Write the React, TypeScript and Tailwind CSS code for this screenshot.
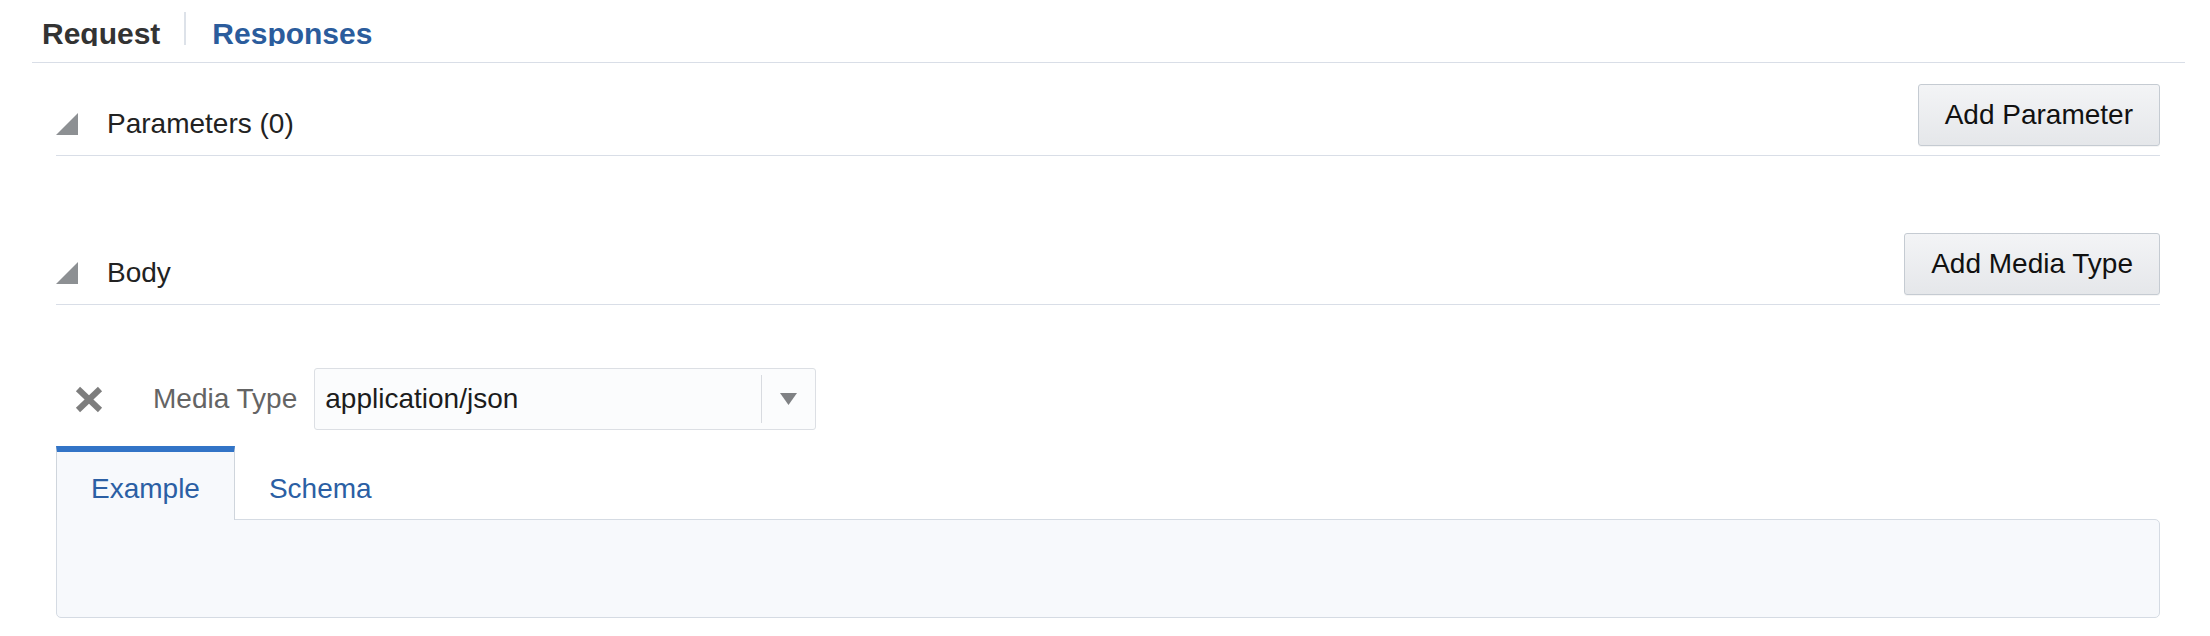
import React from "react";

const font = { fontFamily: '"Liberation Sans", Arial, Helvetica, sans-serif' };

const Caret = () => (
  <svg width="22" height="22" viewBox="0 0 22 22" className="shrink-0">
    <polygon points="22,0 22,22 0,22" fill="#8d9093" />
  </svg>
);

const Button = ({ label }: { label: string }) => (
  <button className="h-[62px] px-[26px] rounded-[3px] border border-[#c5cbd2] bg-gradient-to-b from-[#f3f4f6] to-[#e5e7ea] text-[28px] leading-[32px] text-[#111] shadow-[0_1px_0_rgba(0,0,0,0.04)]">
    {label}
  </button>
);

const SectionHeader = ({ title, action, top }: { title: string; action: string; top: string }) => (
  <div className={`flex items-end justify-between border-b border-[#d9dee7] ${top}`}>
    <div className="flex items-center pb-[15px]">
      <Caret />
      <span className="ml-[29px] text-[28px] leading-[32px] text-[#222]">{title}</span>
    </div>
    <div className="mb-[9px]">
      <Button label={action} />
    </div>
  </div>
);

export default function App() {
  return (
    <div className="w-[2210px] h-[636px] bg-white overflow-hidden" style={font}>
      <div className="pl-[32px] pr-[25px]">
        {/* top tabs */}
        <div className="h-[63px] border-b border-[#d9dee7]">
          <div className="flex h-[46px] overflow-hidden pl-[10px]">
            <span className="pt-[19px] text-[30px] leading-[30px] font-bold text-[#333]">Request</span>
            <div className="ml-[24px] mt-[12px] w-[2px] h-[33px] bg-[#dde2e9]" />
            <span className="ml-[26px] pt-[19px] text-[30px] leading-[30px] font-bold text-[#2b5c9c]">
              Responses
            </span>
          </div>
        </div>

        <div className="pl-[24px] pr-[25px]">
          <SectionHeader title="Parameters (0)" action="Add Parameter" top="pt-[21px]" />
          <SectionHeader title="Body" action="Add Media Type" top="mt-[77px]" />

          {/* media type row */}
          <div className="flex items-center mt-[63px]">
            <svg width="28" height="27" viewBox="0 0 28 27" className="ml-[19px] shrink-0">
              <g stroke="#7d7d7d" strokeWidth="6" strokeLinecap="butt">
                <line x1="3" y1="3" x2="25" y2="24" />
                <line x1="25" y1="3" x2="3" y2="24" />
              </g>
            </svg>
            <span className="ml-[50px] text-[28px] leading-[32px] text-[#646464]">Media Type</span>
            <div className="ml-[17px] w-[502px] h-[62px] flex items-center rounded-[3px] border border-[#dcdfe4] bg-[#fbfcfd]">
              <span className="flex-1 pl-[10px] text-[28px] leading-[32px] text-[#1c1c1c]">application/json</span>
              <div className="w-px h-[48px] bg-[#d8dbe0]" />
              <div className="w-[53px] flex justify-center">
                <svg width="17" height="12" viewBox="0 0 17 12">
                  <polygon points="0,0 17,0 8.5,12" fill="#7f8184" />
                </svg>
              </div>
            </div>
          </div>

          {/* example / schema tabs */}
          <div className="mt-[16px]">
            <div className="flex">
              <div className="relative z-10 -mb-px bg-[#f7f9fc] border-t-[6px] border-t-[#3274c7] border-l border-r border-l-[#cfd5dc] border-r-[#cfd5dc] px-[34px] pt-[21px] pb-[14px]">
                <span className="text-[28px] leading-[32px] text-[#2b5fa4]">Example</span>
              </div>
              <div className="px-[34px] pt-[27px] pb-[14px]">
                <span className="text-[28px] leading-[32px] text-[#2b5fa4]">Schema</span>
              </div>
            </div>
            <div className="h-[99px] bg-[#f7f9fc] border border-[#d5dbe3] rounded-b-[5px] rounded-tr-[5px]" />
          </div>
        </div>
      </div>
    </div>
  );
}
